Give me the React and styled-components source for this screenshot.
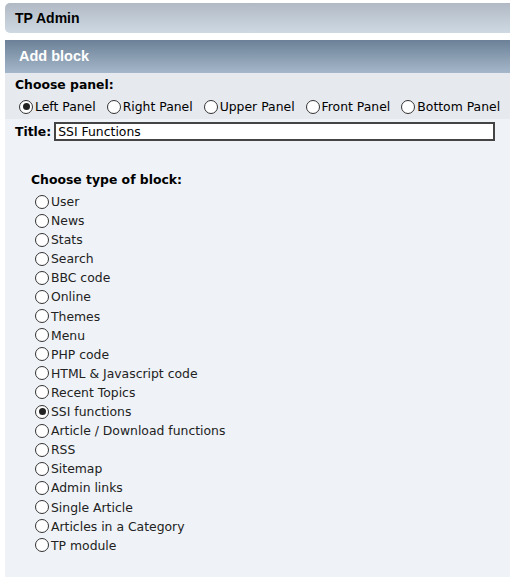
import React, {useState} from 'react'
import styled, {createGlobalStyle} from 'styled-components'

const Global = createGlobalStyle`
  body {
    margin: 0;
    background: #fff;
    font-family: "DejaVu Sans", Verdana, sans-serif;
    font-size: 12.4px;
    line-height: 15px;
    color: #000;
  }
`

const Page = styled.div`
  padding: 3px 0 4px 5px;
`

const CatBar = styled.div`
  height: 30px;
  display: flex;
  align-items: center;
  padding-left: 10px;
  border-radius: 5px 0 0 5px;
  background: linear-gradient(#b1bac4, #cfd9e3);
  font-family: "Liberation Sans", Arial, sans-serif;
  font-weight: bold;
  font-size: 14px;
`

const TitleBar = styled.div`
  margin-top: 7px;
  height: 33px;
  display: flex;
  align-items: center;
  padding-left: 14px;
  padding-bottom: 1px;
  box-sizing: border-box;
  background: linear-gradient(#6c8197, #a5b7ca);
  color: #fff;
  font-family: "Liberation Sans", Arial, sans-serif;
  font-weight: bold;
  font-size: 14.5px;
`

const Panel = styled.div`
  background: #eff3f7;
  height: 504px;
`

const TopSection = styled.div`
  background: #e6e9ee;
  padding: 4px 10px 5px 10px;
`

const Label = styled.div`
  font-weight: bold;
`

const RadioRow = styled.div`
  display: flex;
  gap: 11px;
  margin-top: 7px;
  padding-left: 4px;
`

const Option = styled.label`
  display: flex;
  align-items: center;
  white-space: nowrap;
  color: ${({dim}) => (dim ? '#222' : '#000')};
`

const Radio = styled.span`
  width: 12px;
  height: 12px;
  border: 1px solid #333;
  border-radius: 50%;
  margin-right: 2px;
  display: inline-flex;
  align-items: center;
  justify-content: center;
  background: #fff;

  &::after {
    content: '';
    width: 7px;
    height: 7px;
    border-radius: 50%;
    background: ${({checked}) => (checked ? '#222' : 'transparent')};
  }
`

const TitleRow = styled.div`
  display: flex;
  align-items: center;
  gap: 3px;
  padding: 3px 10px 0 10px;
`

const Input = styled.input`
  width: 433px;
  height: 15px;
  border: 2px solid #444;
  padding: 0 2px;
  font-family: "DejaVu Sans", Verdana, sans-serif;
  font-size: 12.4px;
  outline: none;
`

const BlockSection = styled.div`
  padding: 31px 0 0 26px;
`

const BlockList = styled.div`
  display: flex;
  flex-direction: column;
  margin-top: 5px;
  padding-left: 4px;
  line-height: 19.1px;
  color: #222;
`

const panels = ['Left Panel', 'Right Panel', 'Upper Panel', 'Front Panel', 'Bottom Panel']
const blocks = [
  'User', 'News', 'Stats', 'Search', 'BBC code', 'Online', 'Themes', 'Menu',
  'PHP code', 'HTML & Javascript code', 'Recent Topics', 'SSI functions',
  'Article / Download functions', 'RSS', 'Sitemap', 'Admin links',
  'Single Article', 'Articles in a Category', 'TP module',
]

const App = () => {
  const [panel, setPanel] = useState('Left Panel')
  const [block, setBlock] = useState('SSI functions')
  const [title, setTitle] = useState('SSI Functions')

  return (
    <Page>
      <Global />
      <CatBar>TP Admin</CatBar>
      <TitleBar>Add block</TitleBar>
      <Panel>
        <TopSection>
          <Label>Choose panel:</Label>
          <RadioRow>
            {panels.map(p => (
              <Option key={p} onClick={() => setPanel(p)}>
                <Radio checked={panel === p} />
                {p}
              </Option>
            ))}
          </RadioRow>
        </TopSection>
        <TitleRow>
          <Label>Title:</Label>
          <Input value={title} onChange={e => setTitle(e.target.value)} />
        </TitleRow>
        <BlockSection>
          <Label>Choose type of block:</Label>
          <BlockList>
            {blocks.map(b => (
              <Option key={b} dim onClick={() => setBlock(b)}>
                <Radio checked={block === b} />
                {b}
              </Option>
            ))}
          </BlockList>
        </BlockSection>
      </Panel>
    </Page>
  )
}

export default App
